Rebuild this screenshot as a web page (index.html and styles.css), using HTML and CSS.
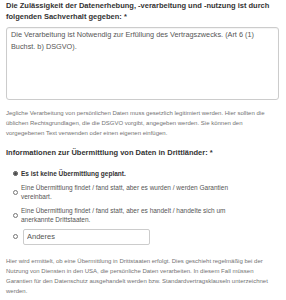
FILE: index.html
```html
<!DOCTYPE html>
<html lang="de">
<head>
    <meta charset="UTF-8">
    <meta name="viewport" content="width=device-width, initial-scale=1.0">
    <title>Datenverarbeitung</title>
    <link rel="stylesheet" href="styles.css">
</head>
<body>

    <!-- Rechtsgrundlage -->
    <div class="field">
        <label class="field-label" for="basis">Die Zulässigkeit der Datenerhebung, -verarbeitung und -nutzung ist durch folgenden Sachverhalt gegeben: *</label>
        <textarea id="basis" class="text-box">Die Verarbeitung ist Notwendig zur Erfüllung des Vertragszwecks. (Art 6 (1) Buchst. b) DSGVO).</textarea>
        <p class="help">Jegliche Verarbeitung von persönlichen Daten muss gesetzlich legitimiert werden. Hier sollten die üblichen Rechtsgrundlagen, die die DSGVO vorgibt, angegeben werden. Sie können den vorgegebenen Text verwenden oder einen eigenen einfügen.</p>
    </div>

    <!-- Drittländer -->
    <div class="field">
        <div class="field-label">Informationen zur Übermittlung von Daten in Drittländer: *</div>
        <div class="radio-list">
            <label class="radio-row selected">
                <input type="radio" name="transfer" checked>
                <span>Es ist keine Übermittlung geplant.</span>
            </label>
            <label class="radio-row">
                <input type="radio" name="transfer">
                <span>Eine Übermittlung findet / fand statt, aber es wurden / werden Garantien vereinbart.</span>
            </label>
            <label class="radio-row">
                <input type="radio" name="transfer">
                <span>Eine Übermittlung findet / fand statt, aber es handelt / handelte sich um anerkannte Drittstaaten.</span>
            </label>
            <label class="radio-row other">
                <input type="radio" name="transfer">
                <input type="text" class="other-input" value="Anderes">
            </label>
        </div>
        <p class="help help-last">Hier wird ermittelt, ob eine Übermittlung in Drittstaaten erfolgt. Dies geschieht regelmäßig bei der Nutzung von Diensten in den USA, die persönliche Daten verarbeiten. In diesem Fall müssen Garantien für den Datenschutz ausgehandelt werden bzw. Standardvertragsklauseln unterzeichnet werden.</p>
    </div>

</body>
</html>
```

FILE: styles.css
```css
/* General Styling */
body {
    font-family: "Liberation Sans", Arial, sans-serif;
    margin: 0;
    padding: 0 6px;
    background: #fff;
    color: #333;
}

.field-label {
    display: block;
    font-size: 7.5px;
    font-weight: bold;
    line-height: 11px;
    margin-bottom: 5px;
}

.text-box {
    display: block;
    box-sizing: border-box;
    width: 273px;
    height: 73px;
    margin: 0;
    padding: 1px 4px;
    border: 1px solid #ccc;
    border-radius: 3px;
    font-family: inherit;
    font-size: 7.3px;
    line-height: 12px;
    color: #555;
    resize: none;
    overflow: hidden;
    box-shadow: inset 0 1px 1px rgba(0, 0, 0, 0.05);
}

.help {
    font-size: 6px;
    line-height: 10px;
    color: #737373;
    margin: 8px 0 9px 0;
}

.help-last {
    margin-top: 11px;
}

/* Radio options */
.radio-list {
    display: flex;
    flex-direction: column;
    gap: 4px;
    margin-top: 11px;
}

.radio-row {
    display: flex;
    align-items: center;
    gap: 3px;
    font-size: 6.5px;
    line-height: 9.5px;
    color: #555;
}

.radio-row span {
    max-width: 225px;
}

.radio-row input[type="radio"] {
    width: 5px;
    height: 5px;
    margin: 0 0 0 7px;
    flex-shrink: 0;
    accent-color: #444;
}

.radio-row.selected {
    font-weight: bold;
    color: #333;
}

.radio-row.other {
    gap: 5px;
}

.other-input {
    box-sizing: border-box;
    width: 127px;
    height: 16px;
    margin: 0;
    padding: 0 3px;
    border: 1px solid #ccc;
    border-radius: 2px;
    font-family: inherit;
    font-size: 7.5px;
    color: #555;
}
```
